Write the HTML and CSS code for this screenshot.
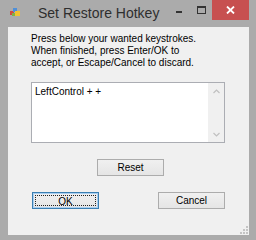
FILE: index.html
```html
<!DOCTYPE html>
<html lang="en">
<head>
  <meta charset="UTF-8" />
  <title>Set Restore Hotkey</title>
  <link rel="stylesheet" href="styles.css">
</head>
<body>
  <div class="window">
    <div class="titlebar">
      <svg class="app-icon" width="10" height="10" viewBox="0 0 10 10">
        <rect x="0" y="3" width="4" height="4" fill="#d64a3a" />
        <rect x="3" y="0" width="4" height="4" fill="#4f8fd8" />
        <rect x="5" y="3" width="5" height="5" fill="#f2c230" />
        <rect x="2" y="5" width="3" height="3" fill="#7fb347" />
      </svg>
      <span class="title">Set Restore Hotkey</span>
      <div class="caption-btns">
        <span class="cap-btn">
          <svg width="8" height="8" viewBox="0 0 8 8"><rect x="1" y="5" width="6" height="2" fill="#333" /></svg>
        </span>
        <span class="cap-btn">
          <svg width="9" height="8" viewBox="0 0 9 8"><rect x="0.5" y="0.5" width="8" height="7" fill="none" stroke="#333" /><rect x="0" y="0" width="9" height="2" fill="#333" /></svg>
        </span>
        <span class="cap-btn close">
          <svg width="9" height="8" viewBox="0 0 9 8"><path d="M1 0.5 L8 7.5 M8 0.5 L1 7.5" stroke="#fff" stroke-width="1.8" /></svg>
        </span>
      </div>
    </div>

    <div class="client">
      <p class="info">Press below your wanted keystrokes.<br>When finished, press Enter/OK to<br>accept, or Escape/Cancel to discard.</p>

      <div class="textbox">
        <div class="textbox-text">LeftControl + +</div>
        <div class="scrollbar">
          <svg width="7" height="5" viewBox="0 0 7 5"><path d="M0.5 4 L3.5 1 L6.5 4" fill="none" stroke="#c0c0c0" stroke-width="1.2" /></svg>
          <svg width="7" height="5" viewBox="0 0 7 5"><path d="M0.5 1 L3.5 4 L6.5 1" fill="none" stroke="#c0c0c0" stroke-width="1.2" /></svg>
        </div>
      </div>

      <div class="reset-row">
        <button class="btn">Reset</button>
      </div>

      <div class="action-row">
        <button class="btn default"><span class="focus">OK</span></button>
        <button class="btn">Cancel</button>
      </div>

      <svg class="grip" width="8" height="8" viewBox="0 0 8 8">
        <rect x="6" y="0" width="2" height="2" fill="#c4c4c4" />
        <rect x="3" y="3" width="2" height="2" fill="#c4c4c4" />
        <rect x="6" y="3" width="2" height="2" fill="#c4c4c4" />
        <rect x="0" y="6" width="2" height="2" fill="#c4c4c4" />
        <rect x="3" y="6" width="2" height="2" fill="#c4c4c4" />
        <rect x="6" y="6" width="2" height="2" fill="#c4c4c4" />
      </svg>
    </div>
  </div>
</body>
</html>
```

FILE: styles.css
```css
html, body {
  margin: 0;
  padding: 0;
}

body {
  width: 256px;
  height: 240px;
  overflow: hidden;
  font-family: 'Liberation Sans', Arial, sans-serif;
}

.window {
  width: 256px;
  height: 240px;
  background: #ababab;
  display: flex;
  flex-direction: column;
  box-sizing: border-box;
  padding: 0 7px 5px 8px;
}

.titlebar {
  height: 27px;
  display: flex;
  align-items: flex-start;
  flex-shrink: 0;
}

.app-icon {
  margin: 8px 0 0 2px;
}

.title {
  margin: 5px 0 0 18px;
  font-size: 14px;
  color: #2e2e2e;
  line-height: 17px;
}

.caption-btns {
  margin-left: auto;
  display: flex;
}

.cap-btn {
  width: 22px;
  height: 20px;
  display: flex;
  align-items: center;
  justify-content: center;
}

.close {
  width: 37px;
  background: #c75050;
}

.client {
  flex: 1;
  background: #f0f0f0;
  position: relative;
  padding: 0 24px 0 23px;
  display: flex;
  flex-direction: column;
}

.info {
  margin: 6px 0 0;
  font-size: 10px;
  line-height: 12px;
  color: #000;
}

.textbox {
  margin-top: 13px;
  height: 61px;
  border: 1px solid #abadb3;
  background: #fff;
  box-sizing: border-box;
  display: flex;
}

.textbox-text {
  flex: 1;
  font-size: 10px;
  padding: 3px 0 0 3px;
  color: #000;
}

.scrollbar {
  width: 16px;
  background: #f0f0f0;
  display: flex;
  flex-direction: column;
  align-items: center;
  justify-content: space-between;
  padding: 6px 0 5px;
}

.btn {
  width: 67px;
  height: 17px;
  padding: 0;
  font-family: 'Liberation Sans', Arial, sans-serif;
  font-size: 10px;
  color: #000;
  border: 1px solid #acacac;
  background: linear-gradient(#f0f0f0, #e5e5e5);
  box-sizing: border-box;
}

.reset-row {
  margin-top: 16px;
  padding-left: 66px;
  display: flex;
}

.action-row {
  margin-top: 16px;
  padding-left: 1px;
  display: flex;
  justify-content: space-between;
}

.default {
  border-color: #3c7fb1;
  box-shadow: inset 0 0 0 1px #a8cff2;
  display: flex;
  align-items: center;
  justify-content: center;
}

.focus {
  display: block;
  width: 61px;
  height: 11px;
  line-height: 11px;
  border: 1px dotted #222;
  box-sizing: border-box;
}

.grip {
  position: absolute;
  right: 1px;
  bottom: 1px;
}
```
